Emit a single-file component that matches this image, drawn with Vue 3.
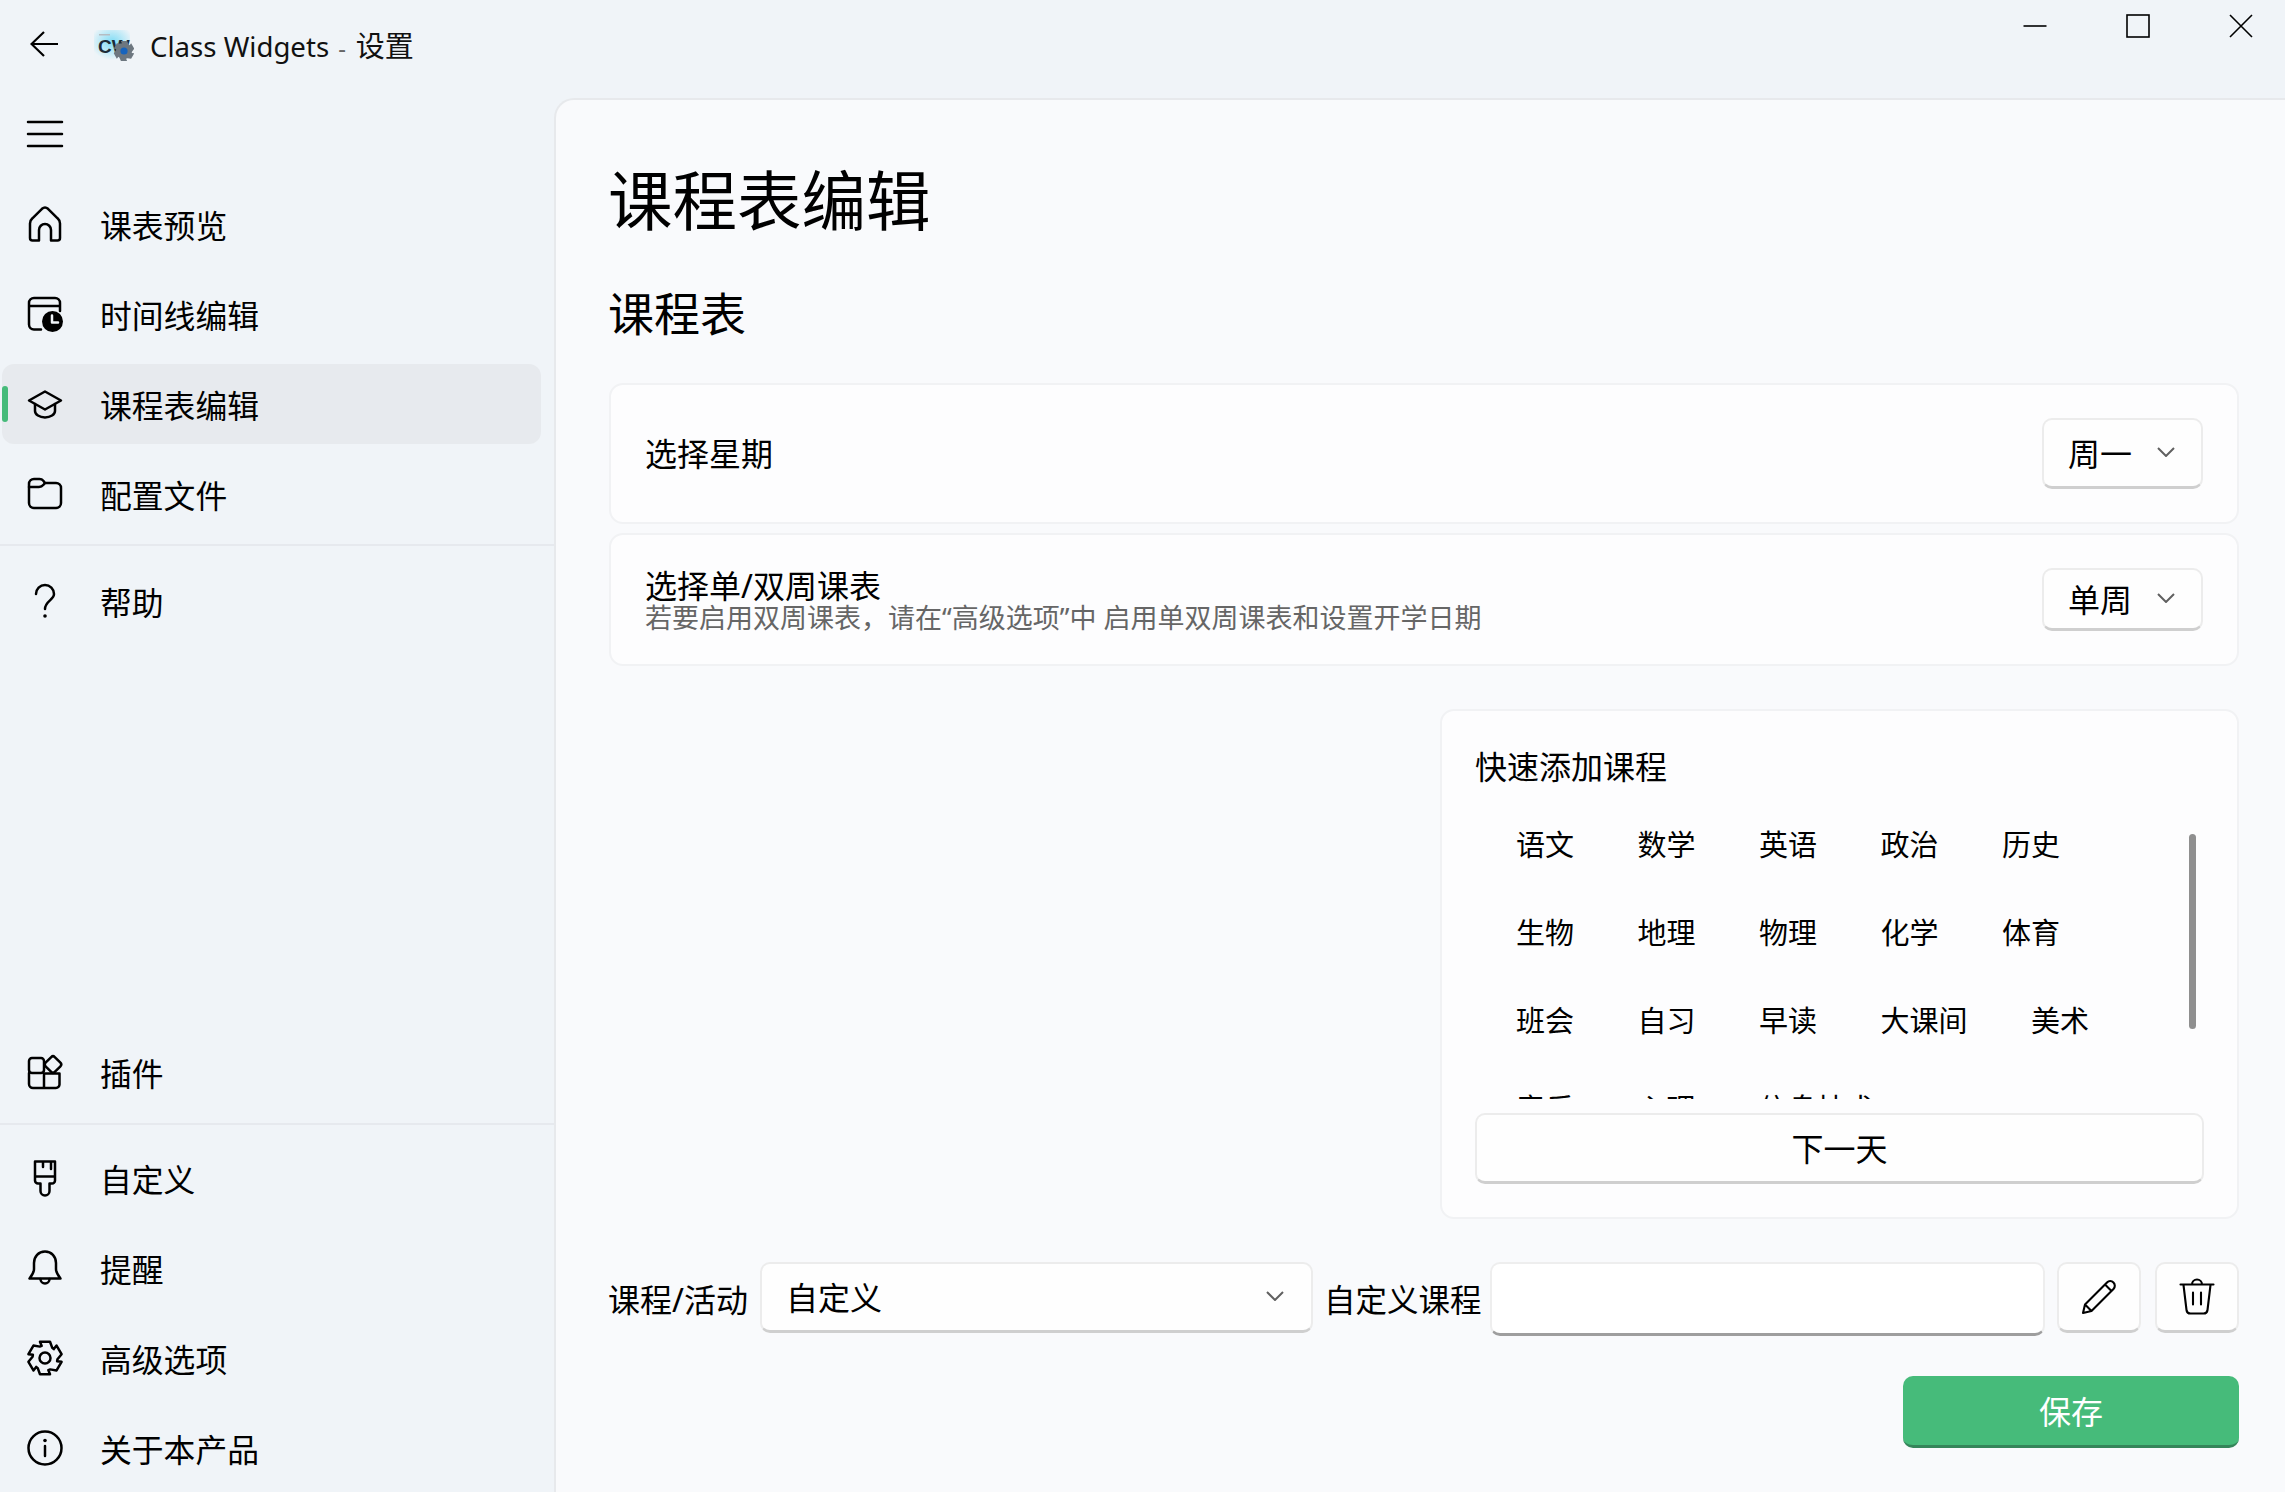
<script setup>
const navTop = [
  { label: '课表预览', icon: 'home' },
  { label: '时间线编辑', icon: 'timeline' },
  { label: '课程表编辑', icon: 'cap', active: true },
  { label: '配置文件', icon: 'folder' }
]

const navBottom = [
  { label: '自定义', icon: 'brush' },
  { label: '提醒', icon: 'bell' },
  { label: '高级选项', icon: 'gear' },
  { label: '关于本产品', icon: 'info' }
]

const lessons = [
  ['语文', '数学', '英语', '政治', '历史'],
  ['生物', '地理', '物理', '化学', '体育'],
  ['班会', '自习', '早读', '大课间', '美术'],
  ['音乐', '心理', '信息技术']
]

// six lobed cog, used by the settings entry and the logo
function gearPath(cx, cy, outer, inner) {
  const pts = []
  for (let i = 0; i < 6; i++) {
    const a = (Math.PI / 3) * i - Math.PI / 2
    const step = [-0.3, 0.3, 0.62, 0.78]
    const radius = [outer, outer, inner, inner]
    step.forEach((s, k) => {
      const t = a + s
      pts.push(`${(cx + Math.cos(t) * radius[k]).toFixed(2)} ${(cy + Math.sin(t) * radius[k]).toFixed(2)}`)
    })
  }
  return 'M' + pts.join('L') + 'Z'
}

const gear = gearPath(18, 18, 17, 12.5)
const logoGear = gearPath(30, 23, 10.5, 8)
</script>

<template>
  <div class="window">
    <header class="titlebar">
      <svg class="back" viewBox="0 0 28 26">
        <path d="M14 1L1.5 13L14 25M1.5 13H28" />
      </svg>
      <svg class="logo" viewBox="0 0 40 34">
        <defs>
          <radialGradient id="logoGlow" cx="0.5" cy="0.4" r="0.6">
            <stop offset="0" stop-color="#7fdcf5" />
            <stop offset="1" stop-color="#eef4f8" />
          </radialGradient>
        </defs>
        <rect x="0" y="2" width="36" height="30" rx="2" fill="url(#logoGlow)" />
        <rect x="5" y="6" width="11" height="1.5" fill="#b5bcc2" />
        <text x="4" y="25" class="logo-text">CW</text>
        <path :d="logoGear" fill="#6d7780" />
        <circle cx="30" cy="23" r="3.6" fill="#1764bd" />
      </svg>
      <span class="app-title">Class Widgets<span class="dash">-</span><span class="cn">设置</span></span>
      <div class="win-buttons">
        <svg viewBox="0 0 24 24"><path d="M0.5 12H23.5" /></svg>
        <svg viewBox="0 0 24 24"><rect x="1" y="1" width="22" height="22" /></svg>
        <svg viewBox="0 0 24 24"><path d="M1 1L23 23M23 1L1 23" /></svg>
      </div>
    </header>

    <div class="body">
      <aside class="sidebar">
        <div class="menu-row">
          <svg class="icon" viewBox="0 0 36 36">
            <path d="M1 6H35M1 18H35M1 30H35" />
          </svg>
        </div>

        <div class="nav-list">
          <div v-for="item in navTop" :key="item.label" class="nav-item" :class="{ active: item.active }">
            <span v-if="item.active" class="marker"></span>
            <svg class="icon" viewBox="0 0 36 36">
              <template v-if="item.icon === 'home'">
                <path d="M3 32V17.5c0-2 .9-3.9 2.4-5.2L15 2.8c1.8-1.6 4.2-1.6 6 0l9.6 9.5c1.5 1.3 2.4 3.2 2.4 5.2V32c0 1.4-1.1 2.5-2.5 2.5H24V24a6 6 0 0 0-12 0v10.5H5.5C4.100 34.500 3 33.400 3 32z" />
              </template>
              <template v-else-if="item.icon === 'timeline'">
                <path d="M14 33.500H7a5 5 0 0 1-5-5V7a5 5 0 0 1 5-5h21a5 5 0 0 1 5 5v8M2 10H33" />
                <circle cx="25.500" cy="25.500" r="10.500" class="solid" />
                <path d="M25 19.500V26.500H31" class="hands" />
              </template>
              <template v-else-if="item.icon === 'cap'">
                <path d="M18 5.500L34 14.500L18 23.500L2 14.500Z" />
                <path d="M8 18V25c0 3.500 4.500 6.500 10 6.500S28 28.500 28 25V18" />
              </template>
              <template v-else>
                <path d="M2 8c0-2.800 2.200-5 5-5h5.500c1.500 0 2.900.7 3.800 1.800L18 7h11c2.800 0 5 2.200 5 5v15c0 2.800-2.200 5-5 5H7c-2.800 0-5-2.200-5-5z" />
                <path d="M2 11h10c2 0 3.500-1 4.500-2.200L18 7" />
              </template>
            </svg>
            <span>{{ item.label }}</span>
          </div>
        </div>

        <div class="divider first"></div>

        <div class="nav-item">
          <svg class="icon" viewBox="0 0 36 36">
            <path d="M9 11a9 9 0 0 1 18 0c0 6-9 7-9 15" />
            <circle cx="18" cy="33" r="1.800" class="solid" />
          </svg>
          <span>帮助</span>
        </div>

        <div class="nav-item plugin">
          <svg class="icon" viewBox="0 0 36 36">
            <rect x="2" y="4" width="15" height="15" rx="3" />
            <path d="M2 19v11a4 4 0 0 0 4 4h23a3.500 3.500 0 0 0 3.500-3.500V19.500H17V34" />
            <rect x="19.500" y="4" width="13" height="13" rx="2.500" transform="rotate(45 26 10.500)" />
          </svg>
          <span>插件</span>
        </div>

        <div class="divider second"></div>

        <div class="nav-list">
          <div v-for="item in navBottom" :key="item.label" class="nav-item">
            <svg class="icon" viewBox="0 0 36 36">
              <template v-if="item.icon === 'brush'">
                <path d="M8 1.500H28V20.500a3 3 0 0 1-3 3H22.500V31a4.500 4.500 0 0 1-9 0V23.500H11a3 3 0 0 1-3-3zM8 16.500H28M16 2V7M24 2V9" />
              </template>
              <template v-else-if="item.icon === 'bell'">
                <path d="M18 1.500c-6.500 0-11 5-11 11.500v6c0 4-2.500 7-4.500 9.500h31c-2-2.500-4.500-5.500-4.500-9.500v-6c0-6.500-4.500-11.500-11-11.500z" />
                <path d="M13.500 29a4.500 4.500 0 0 0 9 0" />
              </template>
              <template v-else-if="item.icon === 'gear'">
                <path :d="gear" />
                <circle cx="18" cy="18" r="5.500" />
              </template>
              <template v-else>
                <circle cx="18" cy="18" r="16.500" />
                <path d="M18 16V26" />
                <circle cx="18" cy="10.500" r="1.800" class="solid" />
              </template>
            </svg>
            <span>{{ item.label }}</span>
          </div>
        </div>
      </aside>

      <main class="panel">
        <h1>课程表编辑</h1>
        <h2>课程表</h2>

        <section class="card row-card day-card">
          <div class="card-title">选择星期</div>
          <div class="select day-select">
            <span>周一</span>
            <svg class="chevron" viewBox="0 0 18 10"><path d="M1 1L9 9L17 1" /></svg>
          </div>
        </section>

        <section class="card row-card week-card">
          <div class="card-text">
            <div class="card-title">选择单/双周课表</div>
            <div class="card-desc">若要启用双周课表，请在“高级选项”中 启用单双周课表和设置开学日期</div>
          </div>
          <div class="select week-select">
            <span>单周</span>
            <svg class="chevron" viewBox="0 0 18 10"><path d="M1 1L9 9L17 1" /></svg>
          </div>
        </section>

        <section class="card quick-card">
          <div class="quick-title">快速添加课程</div>
          <div class="lesson-list">
            <div v-for="(row, i) in lessons" :key="i" class="lesson-row">
              <span v-for="name in row" :key="name">{{ name }}</span>
            </div>
          </div>
          <span class="scroll-thumb"></span>
          <div class="next-btn">下一天</div>
        </section>

        <div class="edit-row">
          <label>课程/活动</label>
          <div class="select lesson-select">
            <span>自定义</span>
            <svg class="chevron" viewBox="0 0 18 10"><path d="M1 1L9 9L17 1" /></svg>
          </div>
          <label class="custom-label">自定义课程</label>
          <div class="text-input"></div>
          <div class="icon-btn">
            <svg class="icon thin" viewBox="0 0 36 36">
              <path d="M2 34l2-8.500L26 3.500a4.500 4.500 0 0 1 6.500 6.400L10.500 32zM4 25.500l6.500 6.500M24 5.500l6.500 6.500" />
            </svg>
          </div>
          <div class="icon-btn">
            <svg class="icon thin" viewBox="0 0 36 36">
              <path d="M1.500 5.500H34.500M4.500 6l3 25a4 4 0 0 0 4 3.500h13a4 4 0 0 0 4-3.500l3-25M13 5.500a5 5 0 0 1 10 0M14 13.500V25.500M22 13.500V25.500" />
            </svg>
          </div>
        </div>

        <div class="save-btn">保存</div>
      </main>
    </div>
  </div>
</template>

<style>
html,
body {
  margin: 0;
  background: #f0f4f8;
}
</style>

<style scoped>
.window {
  width: 2285px;
  height: 1492px;
  display: flex;
  flex-direction: column;
  overflow: hidden;
  background: #f0f4f8;
  color: #000;
  font-family: "Noto Sans", "Noto Sans CJK SC", sans-serif;
}

.titlebar {
  height: 98px;
  flex: none;
  display: flex;
  align-items: flex-start;
  padding-left: 30px;
  box-sizing: border-box;
}
.back {
  width: 28px;
  height: 26px;
  margin-top: 31px;
  fill: none;
  stroke: #000;
  stroke-width: 2.200;
}
.logo {
  width: 40px;
  height: 34px;
  margin: 28px 0 0 36px;
}
.logo-text {
  font-family: "Liberation Sans", sans-serif;
  font-weight: 700;
  font-size: 19px;
  fill: #1c2b38;
}
.app-title {
  margin: 24px 0 0 16px;
  font-size: 27.600px;
  line-height: 44px;
  color: #111;
}
.dash {
  margin: 0 10px 0 9px;
  color: #666;
  font-size: 24px;
}
.cn {
  font-size: 29px;
}
.win-buttons {
  margin-left: auto;
  margin-right: 32px;
  padding-top: 14px;
  display: flex;
  gap: 79px;
}
.win-buttons svg {
  width: 24px;
  height: 24px;
  fill: none;
  stroke: #000;
  stroke-width: 1.600;
}

.body {
  flex: 1;
  display: flex;
  min-height: 0;
}

.sidebar {
  width: 554px;
  flex: none;
  display: flex;
  flex-direction: column;
  box-sizing: border-box;
  padding-bottom: 4px;
}
.menu-row {
  height: 72px;
  display: flex;
  align-items: center;
  padding-left: 27px;
  margin-bottom: 14px;
}
.nav-list {
  display: flex;
  flex-direction: column;
  gap: 10px;
}
.nav-item {
  position: relative;
  height: 80px;
  margin: 0 13px 0 2px;
  padding-left: 25px;
  display: flex;
  align-items: center;
  gap: 37px;
  border-radius: 12px;
  font-size: 31.800px;
}
.nav-item.active {
  background: #e7eaee;
}
.marker {
  position: absolute;
  left: 0;
  top: 22px;
  width: 6px;
  height: 36px;
  border-radius: 3px;
  background: #46bb7a;
}
.plugin {
  margin-top: auto;
}
.icon {
  width: 36px;
  height: 36px;
  flex: none;
  fill: none;
  stroke: #000;
  stroke-width: 2.500;
  stroke-linejoin: round;
  stroke-linecap: round;
  overflow: visible;
}
.icon.thin {
  stroke-width: 2.100;
}
.icon .solid {
  fill: #000;
  stroke: none;
}
.icon .hands {
  stroke: #f0f4f8;
}
.divider {
  height: 2px;
  background: #e6e9ee;
  flex: none;
}
.divider.first {
  margin: 10px 0 15px;
}
.divider.second {
  margin: 11px 0 13px;
}

.panel {
  flex: 1;
  min-width: 0;
  box-sizing: border-box;
  padding: 0 46px 0 53px;
  background: #f9fafc;
  border-top: 2px solid #e7e9ec;
  border-left: 2px solid #e7e9ec;
  border-top-left-radius: 20px;
  display: flex;
  flex-direction: column;
}
h1 {
  margin: 55px 0 0 -1px;
  font-size: 64.500px;
  font-weight: 400;
  line-height: 90px;
}
h2 {
  margin: 36px 0 0 -1px;
  font-size: 46px;
  font-weight: 400;
  line-height: 64px;
}

.card {
  background: #fdfdfe;
  border: 2px solid #f1f2f4;
  border-radius: 14px;
  box-sizing: border-box;
}
.row-card {
  display: flex;
  align-items: center;
  justify-content: space-between;
  padding: 0 34px;
}
.day-card {
  height: 141px;
  margin-top: 38px;
}
.week-card {
  height: 133px;
  margin-top: 9px;
}
.card-title {
  font-size: 32px;
  line-height: 34px;
}
.card-desc {
  font-size: 27px;
  line-height: 30px;
  color: #666;
}
.card-text {
  margin-top: 3px;
}

.select {
  display: flex;
  align-items: center;
  justify-content: space-between;
  background: #fefefe;
  border: 2px solid #ececec;
  border-bottom: 3px solid #cfcfcf;
  border-radius: 10px;
  box-sizing: border-box;
  font-size: 32px;
  padding: 0 26px 2px 24px;
}
.day-select {
  width: 161px;
  height: 71px;
}
.week-select {
  width: 161px;
  height: 63px;
}
.chevron {
  width: 18px;
  height: 10px;
  fill: none;
  stroke: #606060;
  stroke-width: 2;
}

.quick-card {
  position: relative;
  align-self: flex-end;
  width: 799px;
  height: 510px;
  margin-top: 43px;
  padding: 31px 33px 0 33px;
}
.quick-title {
  font-size: 32px;
  line-height: 50px;
}
.lesson-list {
  height: 299px;
  margin-top: 8px;
  overflow: hidden;
}
.lesson-row {
  height: 88px;
  padding: 0 0 3px 41px;
  display: flex;
  align-items: center;
  gap: 63.500px;
  font-size: 29px;
  box-sizing: border-box;
}
.scroll-thumb {
  position: absolute;
  left: 747px;
  top: 123px;
  width: 7px;
  height: 195px;
  border-radius: 4px;
  background: #8f8f8f;
}
.next-btn {
  height: 71px;
  margin-top: 14px;
  padding-bottom: 2px;
  display: flex;
  align-items: center;
  justify-content: center;
  background: #fefefe;
  border: 2px solid #ececec;
  border-bottom: 3px solid #cfcfcf;
  border-radius: 10px;
  box-sizing: border-box;
  font-size: 32px;
}

.edit-row {
  margin-top: 43px;
  height: 74px;
  display: flex;
  align-items: flex-start;
}
.edit-row label {
  font-size: 32px;
  line-height: 75px;
  white-space: nowrap;
  margin-left: -1px;
}
.lesson-select {
  width: 553px;
  height: 71px;
  margin-left: 12px;
  flex: none;
  padding-right: 27px;
}
.edit-row .custom-label {
  margin-left: 11px;
  font-size: 31.500px;
}
.text-input {
  flex: 1;
  height: 74px;
  margin: 0 12px 0 9px;
  background: #fff;
  border: 2px solid #eeeeee;
  border-bottom: 3px solid #9e9e9e;
  border-radius: 10px;
  box-sizing: border-box;
}
.icon-btn {
  width: 84px;
  height: 71px;
  flex: none;
  display: flex;
  align-items: center;
  justify-content: center;
  background: #fefefe;
  border: 2px solid #ececec;
  border-bottom: 3px solid #cfcfcf;
  border-radius: 10px;
  box-sizing: border-box;
}
.icon-btn + .icon-btn {
  margin-left: 14px;
}

.save-btn {
  align-self: flex-end;
  width: 336px;
  height: 72px;
  margin-top: 40px;
  padding-bottom: 2px;
  display: flex;
  align-items: center;
  justify-content: center;
  background: #46bb7a;
  border-bottom: 3px solid #35855a;
  border-radius: 10px;
  box-sizing: border-box;
  color: #fff;
  font-size: 32px;
}
</style>
